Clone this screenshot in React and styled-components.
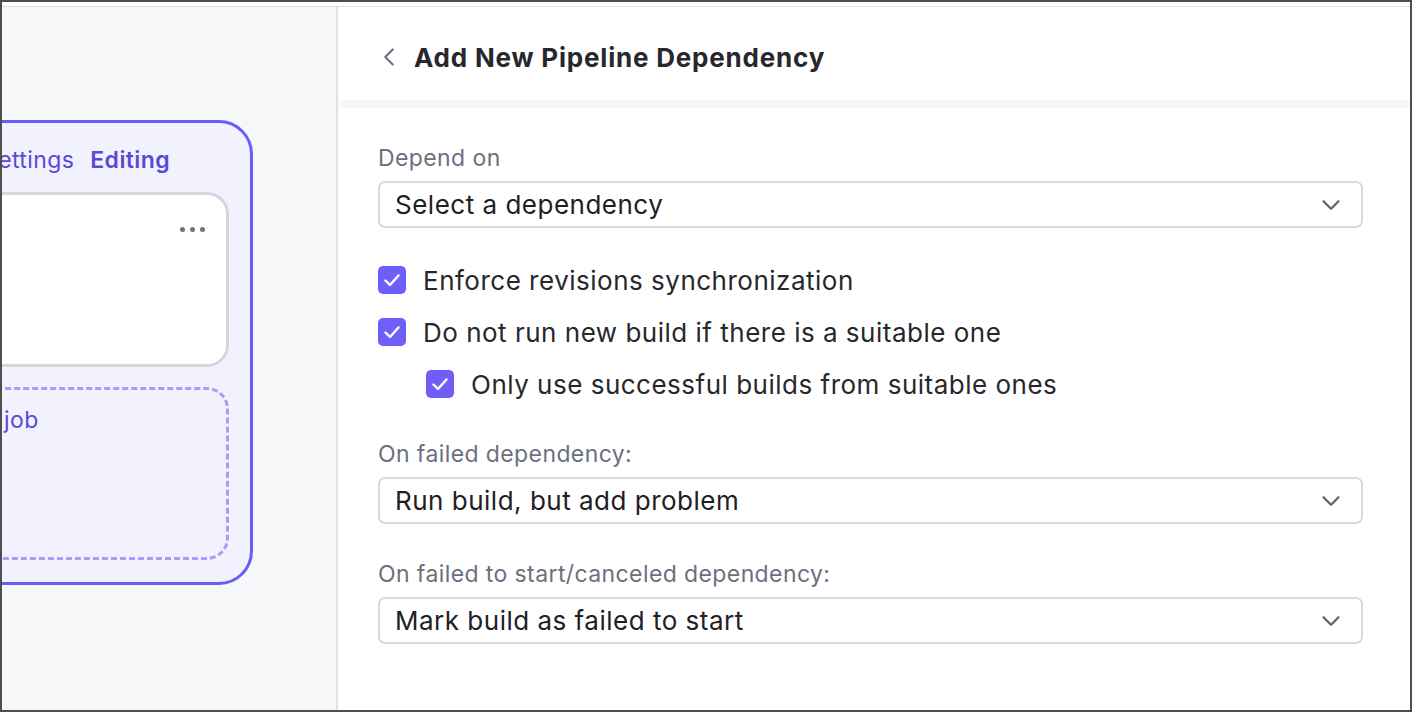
import styled, { createGlobalStyle } from 'styled-components'
import { ChevronLeft, ChevronDown } from 'lucide-react'

const GlobalStyle = createGlobalStyle`
  html, body {
    margin: 0;
    padding: 0;
    background: #ffffff;
  }
  body {
    font-family: Inter, "Noto Sans", "Liberation Sans", sans-serif;
    -webkit-font-smoothing: antialiased;
  }
  * {
    box-sizing: border-box;
  }
`

const Frame = styled.div`
  width: 1412px;
  height: 712px;
  border: 2px solid #4e4e50;
  display: flex;
  flex-direction: column;
  overflow: hidden;
  background: #fff;
`

const TopStrip = styled.div`
  height: 5px;
  flex-shrink: 0;
  background: #fff;
  border-bottom: 1px solid #e2e2e7;
`

const Main = styled.div`
  flex: 1;
  display: grid;
  grid-template-columns: 334px 2px 1fr;
  min-height: 0;
`

const Canvas = styled.div`
  background: #f6f7f9;
  overflow: hidden;
  display: flex;
  justify-content: flex-end;
  align-items: flex-start;
  padding: 113px 83px 0 0;
`

const Divider = styled.div`
  background: #e1e1e6;
`

const StageCard = styled.div`
  flex-shrink: 0;
  width: 420px;
  height: 465px;
  border: 3px solid #6b5cf7;
  border-radius: 34px;
  background: #f2f1fe;
  padding: 22px 21px 0 21px;
  display: flex;
  flex-direction: column;
`

const Tabs = styled.div`
  display: flex;
  justify-content: flex-end;
  gap: 16px;
  padding-right: 59px;
  height: 30px;
  align-items: center;
  margin-bottom: 17px;
`

const Tab = styled.span`
  font-size: 23px;
  line-height: 30px;
  letter-spacing: 0.4px;
  color: #5a49d6;
  font-weight: ${p => (p.$active ? 600 : 400)};
  white-space: nowrap;
`

const JobCard = styled.div`
  height: 175px;
  flex-shrink: 0;
  border: 3px solid #d5d5dc;
  border-radius: 22px;
  background: #fff;
  display: flex;
  justify-content: flex-end;
  padding: 30px 21px 0 0;
`

const Dots = styled.div`
  display: flex;
  gap: 5px;
  height: 8px;
  align-items: center;
`

const Dot = styled.span`
  width: 5px;
  height: 5px;
  border-radius: 50%;
  background: #6f7280;
`

const DropZone = styled.div`
  margin-top: 20px;
  height: 173px;
  flex-shrink: 0;
  border: 3px dashed #a69cf9;
  border-radius: 22px;
  padding: 15px 0 0 92px;
`

const DropText = styled.span`
  font-size: 23px;
  line-height: 30px;
  letter-spacing: 0.4px;
  color: #5a49d6;
  white-space: nowrap;
`

const Panel = styled.div`
  background: #fff;
  display: flex;
  flex-direction: column;
  min-width: 0;
`

const Header = styled.div`
  height: 101px;
  flex-shrink: 0;
  display: flex;
  align-items: center;
  gap: 10px;
  padding: 7px 0 0 36px;
  border-bottom: 8px solid #f6f7f9;
`

const BackIcon = styled(ChevronLeft)`
  color: #6c707e;
  flex-shrink: 0;
`

const Title = styled.h1`
  margin: 0;
  font-size: 26px;
  font-weight: 700;
  color: #27282e;
  letter-spacing: 0.8px;
`

const Body = styled.div`
  padding: 37px 47px 0 40px;
  display: flex;
  flex-direction: column;
`

const Label = styled.div`
  font-size: 23px;
  line-height: 26px;
  letter-spacing: 0.4px;
  color: #6c707e;
  margin-bottom: 10px;
  margin-top: ${p => p.$top || 0}px;
`

const Select = styled.div`
  height: 47px;
  border: 2px solid #d9d9de;
  border-radius: 7px;
  display: flex;
  align-items: center;
  justify-content: space-between;
  padding: 0 15px 0 15px;
  font-size: 26px;
  letter-spacing: 0.5px;
  color: #1f2024;
  background: #fff;
`

const Arrow = styled(ChevronDown)`
  color: #5f6270;
  flex-shrink: 0;
`

const Checks = styled.div`
  margin-top: 26px;
  display: flex;
  flex-direction: column;
`

const CheckRow = styled.label`
  height: 52px;
  display: flex;
  align-items: center;
  gap: 17px;
  padding-left: ${p => (p.$nested ? 48 : 0)}px;
  font-size: 26px;
  letter-spacing: 0.5px;
  color: #27282e;
`

const Box = styled.span`
  width: 28px;
  height: 28px;
  border-radius: 5px;
  background: #6f5ff8;
  display: flex;
  align-items: center;
  justify-content: center;
  flex-shrink: 0;
`

const Check = () => (
  <Box>
    <svg width="20" height="20" viewBox="0 0 20 20" fill="none">
      <path d="M3.5 10.5 L8 15 L16.5 5.5" stroke="#fff" strokeWidth="2.4" strokeLinecap="round" strokeLinejoin="round" />
    </svg>
  </Box>
)

export default function App() {
  return (
    <>
      <GlobalStyle />
      <Frame>
        <TopStrip />
        <Main>
          <Canvas>
            <StageCard>
              <Tabs>
                <Tab>Jobs</Tab>
                <Tab>Settings</Tab>
                <Tab $active>Editing</Tab>
              </Tabs>
              <JobCard>
                <Dots>
                  <Dot />
                  <Dot />
                  <Dot />
                </Dots>
              </JobCard>
              <DropZone>
                <DropText>Add job</DropText>
              </DropZone>
            </StageCard>
          </Canvas>
          <Divider />
          <Panel>
            <Header>
              <BackIcon size={30} strokeWidth={1.7} />
              <Title>Add New Pipeline Dependency</Title>
            </Header>
            <Body>
              <Label>Depend on</Label>
              <Select>
                Select a dependency
                <Arrow size={30} strokeWidth={1.8} />
              </Select>
              <Checks>
                <CheckRow>
                  <Check />
                  Enforce revisions synchronization
                </CheckRow>
                <CheckRow>
                  <Check />
                  Do not run new build if there is a suitable one
                </CheckRow>
                <CheckRow $nested>
                  <Check />
                  Only use successful builds from suitable ones
                </CheckRow>
              </Checks>
              <Label $top={31}>On failed dependency:</Label>
              <Select>
                Run build, but add problem
                <Arrow size={30} strokeWidth={1.8} />
              </Select>
              <Label $top={37}>On failed to start/canceled dependency:</Label>
              <Select>
                Mark build as failed to start
                <Arrow size={30} strokeWidth={1.8} />
              </Select>
            </Body>
          </Panel>
        </Main>
      </Frame>
    </>
  )
}
